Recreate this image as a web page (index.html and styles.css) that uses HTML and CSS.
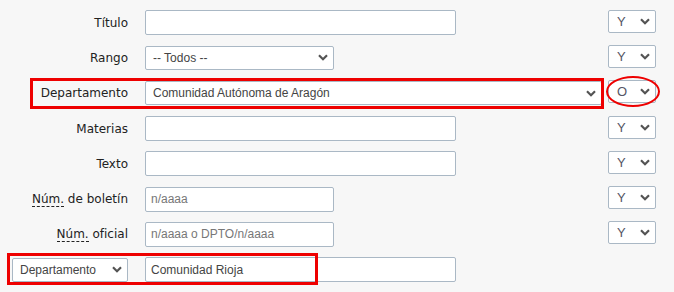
FILE: index.html
```html
<!DOCTYPE html>
<html lang="es">
<head>
    <meta charset="UTF-8">
    <meta name="viewport" content="width=device-width, initial-scale=1.0">
    <title>Búsqueda avanzada</title>
    <link rel="stylesheet" href="styles.css">
</head>
<body>
    <form class="search">
        <div class="row">
            <label class="lbl" for="titulo">Título</label>
            <input class="txt wide" id="titulo" type="text">
            <select class="op"><option>Y</option><option>O</option><option>NO</option></select>
        </div>
        <div class="row">
            <label class="lbl" for="rango">Rango</label>
            <select class="sel mid" id="rango"><option>-- Todos --</option></select>
            <select class="op"><option>Y</option><option>O</option><option>NO</option></select>
        </div>
        <div class="row">
            <span class="mark dept"></span>
            <label class="lbl" for="dpto">Departamento</label>
            <select class="sel full" id="dpto"><option>Comunidad Autónoma de Aragón</option></select>
            <span class="ring"></span>
            <select class="op"><option>O</option><option>Y</option><option>NO</option></select>
        </div>
        <div class="row">
            <label class="lbl" for="materias">Materias</label>
            <input class="txt wide" id="materias" type="text">
            <select class="op"><option>Y</option><option>O</option><option>NO</option></select>
        </div>
        <div class="row">
            <label class="lbl" for="texto">Texto</label>
            <input class="txt wide" id="texto" type="text">
            <select class="op"><option>Y</option><option>O</option><option>NO</option></select>
        </div>
        <div class="row">
            <label class="lbl" for="boletin"><abbr title="Número">Núm.</abbr> de boletín</label>
            <input class="txt mid" id="boletin" type="text" placeholder="n/aaaa">
            <select class="op"><option>Y</option><option>O</option><option>NO</option></select>
        </div>
        <div class="row">
            <label class="lbl" for="oficial"><abbr title="Número">Núm.</abbr> oficial</label>
            <input class="txt mid" id="oficial" type="text" placeholder="n/aaaa o DPTO/n/aaaa">
            <select class="op"><option>Y</option><option>O</option><option>NO</option></select>
        </div>
        <div class="row">
            <span class="mark extra"></span>
            <div class="lbl">
                <select class="sel field"><option>Departamento</option><option>Materia</option></select>
            </div>
            <input class="txt wide" type="text" value="Comunidad Rioja">
        </div>
    </form>
</body>
</html>
```

FILE: styles.css
```css
body {
    margin: 0;
    padding: 0;
    background-color: #f7f7f7;
    font-family: "DejaVu Sans", Verdana, sans-serif;
    font-size: 12px;
    color: #222;
}

.search {
    padding: 5px 18px 0 0;
}

.row {
    position: relative;
    display: flex;
    align-items: center;
    height: 35.3px;
}

.lbl {
    width: 128px;
    margin-right: 17px;
    text-align: right;
    flex-shrink: 0;
}

.lbl abbr {
    text-decoration: none;
    border-bottom: 1px dashed #222;
}

.txt, .sel, .op {
    box-sizing: border-box;
    border: 1px solid #aab8c5;
    border-radius: 2px;
    background-color: #fff;
    font-family: "Liberation Sans", Arial, sans-serif;
    font-size: 12px;
    color: #444;
    margin: 0;
}

.txt {
    height: 25px;
    padding: 0 5px;
}

.txt::placeholder {
    color: #777;
}

.sel, .op {
    height: 24px;
    appearance: none;
    -webkit-appearance: none;
    padding: 0 24px 0 7px;
    background-image: url("data:image/svg+xml,%3Csvg xmlns='http://www.w3.org/2000/svg' width='10' height='7' viewBox='0 0 10 7'%3E%3Cpath d='M1 1.2l4 4 4-4' fill='none' stroke='%23555' stroke-width='2.2'/%3E%3C/svg%3E");
    background-repeat: no-repeat;
    background-position: right 5px center;
}

.wide {
    width: 311px;
}

.mid {
    width: 189px;
}

.full {
    width: 457px;
}

.field {
    width: 116px;
    margin-left: 12px;
    text-align: left;
}

.op {
    width: 48px;
    height: 23px;
    margin-left: auto;
    margin-bottom: 3px;
    padding-left: 8px;
    font-size: 13px;
    color: #556;
}

/* notes drawn on the screenshot */
.mark {
    position: absolute;
    border: 3px solid #e00;
    box-sizing: border-box;
    pointer-events: none;
}

.mark.dept {
    left: 30px;
    top: 2px;
    width: 574px;
    height: 31px;
}

.mark.extra {
    left: 7px;
    top: 1px;
    width: 311px;
    height: 32px;
}

.ring {
    position: absolute;
    right: -4px;
    top: 0;
    width: 54px;
    height: 31px;
    border: 2px solid #e00;
    border-radius: 50%;
    box-sizing: border-box;
    pointer-events: none;
    z-index: 1;
}
```
